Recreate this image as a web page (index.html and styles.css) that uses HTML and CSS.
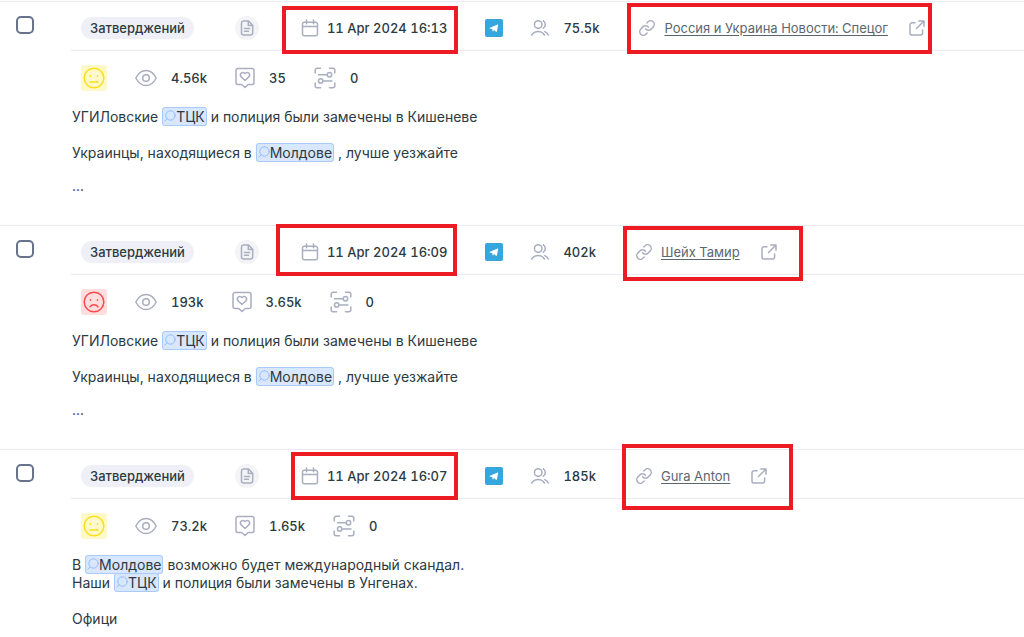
FILE: index.html
```html
<!DOCTYPE html>
<html lang="uk">
<head>
    <meta charset="UTF-8">
    <meta name="viewport" content="width=device-width, initial-scale=1.0">
    <title>Posts</title>
    <link rel="stylesheet" href="styles.css">
</head>
<body>
    <svg class="sprite" aria-hidden="true">
        <symbol id="i-doc" viewBox="0 0 16 16">
            <path d="M9.5 1h-5a2 2 0 0 0-2 2v10a2 2 0 0 0 2 2h7.200a2 2 0 0 0 2-2V5.200zM9.300 1.200v4.200h4.200M5.500 8.500h5M5.500 11.300h4"/>
        </symbol>
        <symbol id="i-calendar" viewBox="0 0 18 18">
            <path d="M3.500 3.200h11a2 2 0 0 1 2 2v9.600a2 2 0 0 1-2 2h-11a2 2 0 0 1-2-2V5.200a2 2 0 0 1 2-2zM1.500 7.500h15M5.500 1v3.800M12.500 1v3.800"/>
        </symbol>
        <symbol id="i-users" viewBox="0 0 18 18">
            <circle cx="7.200" cy="5.500" r="3.800"/>
            <path d="M12.300 1.900c2.600 1.400 2.600 5.800 0 7.200M.8 16c1.400-2.300 3.600-3.500 6.300-3.500s4.900 1.200 6.300 3.500M13.800 12.600c1.500.6 2.700 1.700 3.500 3.400"/>
        </symbol>
        <symbol id="i-link" viewBox="1 1 22 22">
            <path d="M10 13a5 5 0 0 0 7.540.54l3-3a5 5 0 0 0-7.070-7.070l-1.720 1.710M14 11a5 5 0 0 0-7.540-.54l-3 3a5 5 0 0 0 7.070 7.070l1.710-1.710"/>
        </symbol>
        <symbol id="i-external" viewBox="0 0 16 16">
            <path d="M6 2.700H3.200A2.200 2.200 0 0 0 1 4.900v8a2.200 2.200 0 0 0 2.200 2.200h8.200a2.200 2.200 0 0 0 2.200-2.200V10M7.500 8.500 14.800 1.200M9.800 1H15v5.200"/>
        </symbol>
        <symbol id="i-eye" viewBox="0 0 22 18">
            <path d="M.8 9C3.300 4.200 6.700 1.500 11 1.500S18.700 4.200 21.200 9c-2.500 4.800-5.900 7.500-10.200 7.500S3.300 13.800.8 9z"/>
            <circle cx="11" cy="9" r="3.300"/>
        </symbol>
        <symbol id="i-heart" viewBox="0 0 20 22">
            <path d="M3 1.500h14a2 2 0 0 1 2 2v12a2 2 0 0 1-2 2h-3.800L10 20.500l-3.200-3H3a2 2 0 0 1-2-2v-12a2 2 0 0 1 2-2zM10 13.500 6.300 10C3.700 7 7.600 3.600 10 6.600c2.400-3 6.300.4 3.700 3.400z"/>
        </symbol>
        <symbol id="i-scan" viewBox="0 0 22 22">
            <path d="M1.200 6V3.200a2 2 0 0 1 2-2H6.500M15.500 1.200h3.300a2 2 0 0 1 2 2V6M1.200 16v2.800a2 2 0 0 0 2 2H6.500M15.500 20.800h3.300a2 2 0 0 0 2-2V16M4.500 7.700h8.700M9 14h9"/>
            <circle cx="15.500" cy="7.700" r="2.200"/>
            <circle cx="6.700" cy="14" r="2.200"/>
        </symbol>
        <symbol id="i-neutral" viewBox="0 0 22 22">
            <circle cx="11" cy="11" r="9.800"/>
            <path d="M7 15h8M7.500 8.700v.6M14.500 8.700v.6"/>
        </symbol>
        <symbol id="i-sad" viewBox="0 0 22 22">
            <circle cx="11" cy="11" r="9.800"/>
            <path d="M7 15.800c2-2.800 6-2.800 8 0M7.500 8.700v.6M14.500 8.700v.6"/>
        </symbol>
        <symbol id="i-search" viewBox="0 0 12 12">
            <circle cx="6.500" cy="5.500" r="4.700"/>
            <path d="M3.200 8.800.8 11.200"/>
        </symbol>
        <symbol id="i-telegram" viewBox="0 0 18 18">
            <path d="M4.500 8.900 12.700 5.600c.4-.1.600.1.500.5l-1.300 6.300c-.1.500-.4.600-.8.300L9.100 11.200l-1 1c-.3.200-.5.100-.6-.2L7.100 10 4.500 9.400c-.3-.1-.3-.4 0-.5z" fill="#fff" stroke="none"/>
        </symbol>
    </svg>

    <main class="posts">
        <article class="post">
            <input type="checkbox" class="post-check" aria-label="Вибрати допис 1">
            <div class="post-body">
                <header class="post-head">
                    <span class="status">Затверджений</span>
                    <span class="doc"><svg class="icon icon-16"><use href="#i-doc"/></svg></span>
                    <span class="date"><svg class="icon icon-18"><use href="#i-calendar"/></svg><time>11 Apr 2024 16:13</time></span>
                    <span class="telegram"><svg class="icon icon-18"><use href="#i-telegram"/></svg></span>
                    <span class="members"><svg class="icon icon-18"><use href="#i-users"/></svg>75.5k</span>
                    <span class="source">
                        <svg class="icon icon-16 chain"><use href="#i-link"/></svg>
                        <a href="#">Россия и Украина Новости: Спецог</a>
                        <svg class="icon icon-16 external"><use href="#i-external"/></svg>
                    </span>
                </header>
                <div class="stats">
                    <span class="mood neutral"><svg class="icon icon-22"><use href="#i-neutral"/></svg></span>
                    <span class="stat"><svg class="icon icon-22"><use href="#i-eye"/></svg>4.56k</span>
                    <span class="stat"><svg class="icon icon-20"><use href="#i-heart"/></svg>35</span>
                    <span class="stat"><svg class="icon icon-22"><use href="#i-scan"/></svg>0</span>
                </div>
                <div class="text">
                    <p>УГИЛовские <mark><svg class="icon"><use href="#i-search"/></svg>ТЦК</mark> и полиция были замечены в Кишеневе</p>
                    <p>Украинцы, находящиеся в <mark><svg class="icon"><use href="#i-search"/></svg>Молдове</mark> , лучше уезжайте</p>
                    <p class="more">...</p>
                </div>
            </div>
            <div class="frame frame-date-1"></div>
            <div class="frame frame-source-1"></div>
        </article>

        <article class="post">
            <input type="checkbox" class="post-check" aria-label="Вибрати допис 2">
            <div class="post-body">
                <header class="post-head">
                    <span class="status">Затверджений</span>
                    <span class="doc"><svg class="icon icon-16"><use href="#i-doc"/></svg></span>
                    <span class="date"><svg class="icon icon-18"><use href="#i-calendar"/></svg><time>11 Apr 2024 16:09</time></span>
                    <span class="telegram"><svg class="icon icon-18"><use href="#i-telegram"/></svg></span>
                    <span class="members"><svg class="icon icon-18"><use href="#i-users"/></svg>402k</span>
                    <span class="source">
                        <svg class="icon icon-16 chain"><use href="#i-link"/></svg>
                        <a href="#">Шейх Тамир</a>
                        <svg class="icon icon-16 external"><use href="#i-external"/></svg>
                    </span>
                </header>
                <div class="stats">
                    <span class="mood sad"><svg class="icon icon-22"><use href="#i-sad"/></svg></span>
                    <span class="stat"><svg class="icon icon-22"><use href="#i-eye"/></svg>193k</span>
                    <span class="stat"><svg class="icon icon-20"><use href="#i-heart"/></svg>3.65k</span>
                    <span class="stat"><svg class="icon icon-22"><use href="#i-scan"/></svg>0</span>
                </div>
                <div class="text">
                    <p>УГИЛовские <mark><svg class="icon"><use href="#i-search"/></svg>ТЦК</mark> и полиция были замечены в Кишеневе</p>
                    <p>Украинцы, находящиеся в <mark><svg class="icon"><use href="#i-search"/></svg>Молдове</mark> , лучше уезжайте</p>
                    <p class="more">...</p>
                </div>
            </div>
            <div class="frame frame-date-2"></div>
            <div class="frame frame-source-2"></div>
        </article>

        <article class="post">
            <input type="checkbox" class="post-check" aria-label="Вибрати допис 3">
            <div class="post-body">
                <header class="post-head">
                    <span class="status">Затверджений</span>
                    <span class="doc"><svg class="icon icon-16"><use href="#i-doc"/></svg></span>
                    <span class="date"><svg class="icon icon-18"><use href="#i-calendar"/></svg><time>11 Apr 2024 16:07</time></span>
                    <span class="telegram"><svg class="icon icon-18"><use href="#i-telegram"/></svg></span>
                    <span class="members"><svg class="icon icon-18"><use href="#i-users"/></svg>185k</span>
                    <span class="source">
                        <svg class="icon icon-16 chain"><use href="#i-link"/></svg>
                        <a href="#">Gura Anton</a>
                        <svg class="icon icon-16 external"><use href="#i-external"/></svg>
                    </span>
                </header>
                <div class="stats">
                    <span class="mood neutral"><svg class="icon icon-22"><use href="#i-neutral"/></svg></span>
                    <span class="stat"><svg class="icon icon-22"><use href="#i-eye"/></svg>73.2k</span>
                    <span class="stat"><svg class="icon icon-20"><use href="#i-heart"/></svg>1.65k</span>
                    <span class="stat"><svg class="icon icon-22"><use href="#i-scan"/></svg>0</span>
                </div>
                <div class="text">
                    <p>В <mark><svg class="icon"><use href="#i-search"/></svg>Молдове</mark> возможно будет международный скандал.<br>
                    Наши <mark><svg class="icon"><use href="#i-search"/></svg>ТЦК</mark> и полиция были замечены в Унгенах.</p>
                    <p>Офици</p>
                </div>
            </div>
            <div class="frame frame-date-3"></div>
            <div class="frame frame-source-3"></div>
        </article>
    </main>
</body>
</html>
```
FILE: styles.css
```css
:root {
    --text: #2c3a42;
    --link: #5b6770;
    --icon: #a9aec0;
    --line: #e9eaf3;
    --frame: #ed1c24;
}

* {
    margin: 0;
    padding: 0;
    box-sizing: border-box;
}

body {
    padding-top: 1px;
    background: white;
    color: var(--text);
    font-family: Inter, sans-serif;
    font-size: 14px;
    line-height: 18px;
}

.sprite {
    display: none;
}

.icon {
    flex: none;
    fill: none;
    stroke: var(--icon);
    stroke-width: 1.5;
    stroke-linecap: round;
    stroke-linejoin: round;
}

.icon-16 {
    width: 16px;
    height: 16px;
}

.icon-18 {
    width: 18px;
    height: 18px;
}

.icon-20 {
    width: 20px;
    height: 22px;
}

.icon-22 {
    width: 22px;
    height: 22px;
}

.post {
    position: relative;
    display: flex;
    border-top: 1px solid var(--line);
    padding-bottom: 27px;
}

.post:last-child {
    padding-bottom: 0;
}

.post-check {
    appearance: none;
    flex: none;
    width: 18px;
    height: 18px;
    margin: 14px 37px 0 16px;
    border: 2px solid #667389;
    border-radius: 5px;
    background: white;
}

.post-check:checked {
    background: #667389;
}

.post-body {
    flex: 1;
    min-width: 0;
}

.post-head {
    display: flex;
    align-items: center;
    height: 49px;
    padding: 4px 0 0 10px;
    border-bottom: 1px solid var(--line);
    font-size: 13px;
    font-weight: 500;
    font-variant-numeric: tabular-nums;
    white-space: nowrap;
}

.status {
    padding: 2px 9px;
    border-radius: 11px;
    background: #eff0f7;
}

.doc {
    display: flex;
    align-items: center;
    justify-content: center;
    width: 24px;
    height: 24px;
    margin-left: 41px;
    border-radius: 50%;
    background: #f4f4f6;
}

.date,
.members,
.source {
    display: flex;
    align-items: center;
}

.date {
    gap: 8px;
    margin-left: 42px;
}

.telegram {
    display: flex;
    margin-left: 38px;
    border-radius: 2px;
    background: #35a6de;
}

.members {
    gap: 14px;
    margin-left: 28px;
}

.source {
    gap: 9px;
    margin-left: 40px;
}

.source a {
    color: var(--link);
    font-weight: 400;
    text-underline-offset: 2px;
}

.chain {
    stroke-width: 2;
}

.external {
    margin-left: 12px;
}

.stats {
    display: flex;
    align-items: center;
    gap: 28px;
    padding: 14px 0 0 10px;
    font-size: 13px;
    font-weight: 500;
    font-variant-numeric: tabular-nums;
}

.mood {
    display: flex;
    align-items: center;
    justify-content: center;
    width: 26px;
    height: 26px;
    border-radius: 3px;
}

.neutral {
    background: #fff9c9;
}

.neutral .icon {
    stroke: #fbdf1d;
}

.sad {
    background: #ffdede;
}

.sad .icon {
    stroke: #fb4b50;
}

.stat {
    display: flex;
    align-items: center;
    gap: 14px;
}

.text {
    margin-top: 17px;
    padding-left: 1px;
}

.text p + p {
    margin-top: 18px;
}

.text p + .more {
    margin-top: 15px;
    padding-bottom: 3px;
}

mark {
    padding: 0 1px;
    border: 1px solid #a9cbfb;
    border-radius: 3px;
    background: #d8e7fd;
    color: inherit;
}

mark .icon {
    width: 12px;
    height: 12px;
    stroke: #93bdfa;
    stroke-width: 1;
}

/* Red callouts drawn over the date and the source of each post */
.frame {
    position: absolute;
    border: 4px solid var(--frame);
    pointer-events: none;
}

.frame-date-1 {
    left: 282px;
    top: 4px;
    width: 176px;
    height: 48px;
}

.frame-source-1 {
    left: 627px;
    top: 1px;
    width: 305px;
    height: 51px;
}

.frame-date-2 {
    left: 276px;
    top: -2px;
    width: 181px;
    height: 52px;
}

.frame-source-2 {
    left: 623px;
    top: 0;
    width: 180px;
    height: 55px;
}

.frame-date-3 {
    left: 291px;
    top: 2px;
    width: 167px;
    height: 48px;
}

.frame-source-3 {
    left: 622px;
    top: -6px;
    width: 171px;
    height: 66px;
}
```
